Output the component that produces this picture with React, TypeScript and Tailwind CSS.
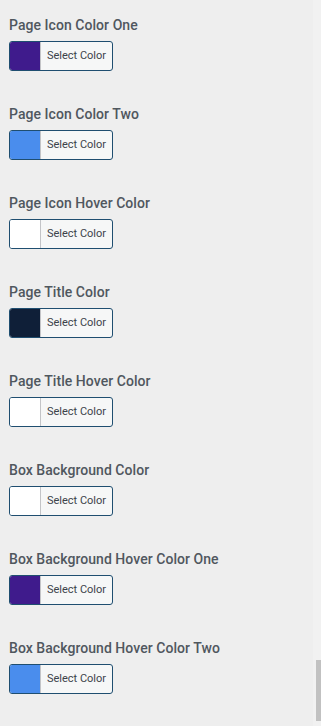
const fields = [
  { label: 'Page Icon Color One', color: '#3f1b8c' },
  { label: 'Page Icon Color Two', color: '#4a8ded' },
  { label: 'Page Icon Hover Color', color: '#ffffff' },
  { label: 'Page Title Color', color: '#0f1f38' },
  { label: 'Page Title Hover Color', color: '#ffffff' },
  { label: 'Box Background Color', color: '#ffffff' },
  { label: 'Box Background Hover Color One', color: '#3f1b8c' },
  { label: 'Box Background Hover Color Two', color: '#4a8ded' },
]

function ColorField({ label, color }: { label: string; color: string }) {
  return (
    <div className="h-[89px] pt-[15px]">
      <div className="text-[14px] leading-[20px] font-medium text-[#50575e] tracking-[0.05px]">{label}</div>
      <button
        type="button"
        className="mt-[6px] flex h-[30px] w-[104px] overflow-hidden rounded-[3px] border border-[#1f4e70] bg-[#f6f7f7]"
      >
        <span className="h-full w-[31px] border-r border-[#c3c4c7]" style={{ background: color }} />
        <span className="flex-1 self-center pb-[2px] text-center text-[11px] leading-none text-[#3c434a]">Select Color</span>
      </button>
    </div>
  )
}

export default function App() {
  return (
    <div className="flex h-[726px] w-[321px] overflow-hidden bg-[#eeeeee] font-['Roboto','Liberation_Sans',sans-serif]">
      <div className="flex-1 pl-[9px]">
        {fields.map(f => (
          <ColorField key={f.label} label={f.label} color={f.color} />
        ))}
      </div>
      <div className="flex w-[8px] flex-col bg-[#f1f1f1]">
        <div className="h-[660px]" />
        <div className="ml-[3px] h-[61px] w-[5px] bg-[#c1c1c1]" />
      </div>
    </div>
  )
}
